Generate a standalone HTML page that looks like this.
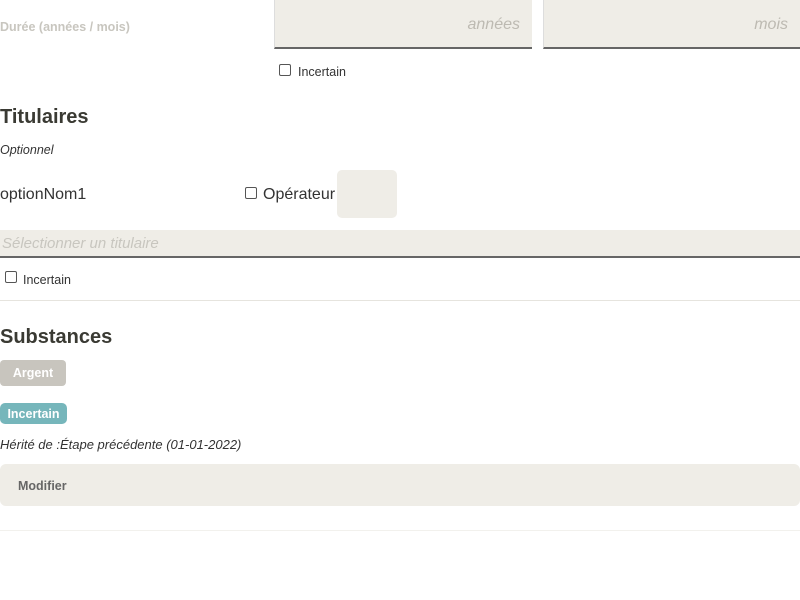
<!DOCTYPE html>
<html><head><meta charset="utf-8"><style>
*{box-sizing:border-box;margin:0;padding:0}
body{width:800px;height:600px;background:#fff;font-family:"Liberation Sans",sans-serif;color:#333;position:relative;overflow:hidden}
.a{position:absolute}
.cb{position:absolute;width:12px;height:12px;border:1px solid #555;border-radius:2px;background:#fff}
.in{background:#efede7;border-bottom:2px solid #666}
h2{position:absolute;font-size:20px;font-weight:bold;color:#3a3a33}
</style></head><body>
<div class="a" style="left:0;top:20px;font-size:12.5px;font-weight:bold;color:#c8c6bf">Durée (années / mois)</div>
<div class="a in" style="left:274px;top:0;width:258px;height:49px;border-left:1px solid #ddd"></div>
<div class="a" style="left:274px;top:16px;width:246px;text-align:right;font-style:italic;color:#bdbab2;font-size:16px">années</div>
<div class="a in" style="left:543px;top:0;width:257px;height:49px;border-left:1px solid #ddd"></div>
<div class="a" style="left:543px;top:16px;width:245px;text-align:right;font-style:italic;color:#bdbab2;font-size:16px">mois</div>
<div class="cb" style="left:279px;top:64px"></div>
<div class="a" style="left:298px;top:65px;font-size:12.5px">Incertain</div>
<h2 style="left:0;top:106px">Titulaires</h2>
<div class="a" style="left:0;top:143px;font-size:12.5px;font-style:italic">Optionnel</div>
<div class="a" style="left:0;top:186px;font-size:16px">optionNom1</div>
<div class="cb" style="left:245px;top:187px"></div>
<div class="a" style="left:263px;top:186px;font-size:16px">Opérateur</div>
<div class="a" style="left:337px;top:170px;width:60px;height:48px;background:#efede7;border-radius:5px"></div>
<div class="a in" style="left:0;top:230px;width:800px;height:28px"></div>
<div class="a" style="left:2px;top:235px;font-size:15px;font-style:italic;color:#c8c6bf">Sélectionner un titulaire</div>
<div class="cb" style="left:5px;top:271px"></div>
<div class="a" style="left:23px;top:273px;font-size:12.5px">Incertain</div>
<div class="a" style="left:0;top:300px;width:800px;height:1px;background:#e6e4de"></div>
<h2 style="left:0;top:326px">Substances</h2>
<div class="a" style="left:0;top:360px;width:66px;height:26px;background:#c8c5be;border-radius:4px;color:#fff;font-weight:bold;font-size:12.5px;text-align:center;line-height:27px">Argent</div>
<div class="a" style="left:0;top:403px;width:67px;height:21px;background:#76b6bb;border-radius:5px;color:#fff;font-weight:bold;font-size:12.5px;text-align:center;line-height:22px">Incertain</div>
<div class="a" style="left:0;top:437px;font-size:13px;font-style:italic">Hérité de :Étape précédente (01-01-2022)</div>
<div class="a" style="left:0;top:464px;width:800px;height:42px;background:#efede7;border-radius:6px;padding-left:18px;line-height:44px;font-size:12.5px;font-weight:bold;color:#666">Modifier</div>
<div class="a" style="left:0;top:530px;width:800px;height:1px;background:#f2f1ed"></div>
</body></html>
